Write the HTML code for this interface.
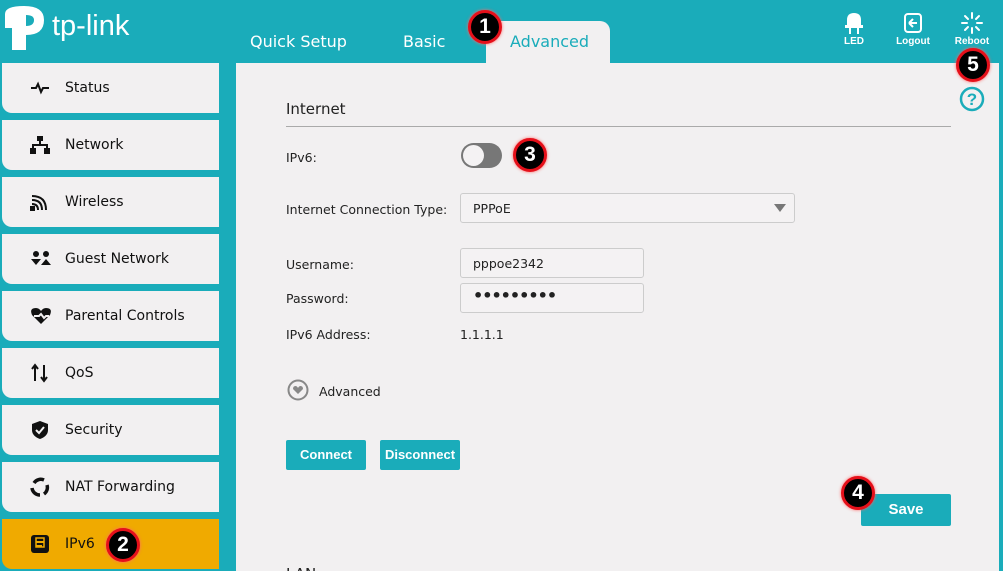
<!DOCTYPE html>
<html style="overflow:hidden;width:1003px;height:571px"><head><meta charset="utf-8"><style>
*{margin:0;padding:0;box-sizing:border-box}
body{width:1003px;height:571px;overflow:hidden;background:#1aacba;font-family:"DejaVu Sans","Liberation Sans",sans-serif;position:relative;color:#222}
.abs{position:absolute}
.tab{position:absolute;top:32px;font-size:16px;color:#fff}
.side{position:absolute;left:2px;width:217px;height:50px;background:#f2f0f1;border-radius:0 0 0 10px;font-size:14px;color:#111}
.side span{position:absolute;left:63px;top:17px}
.side svg{position:absolute;left:28px;top:15px}
.panel{position:absolute;left:236px;top:63px;width:763px;height:508px;background:#f2f0f1}
.lbl{position:absolute;font-size:12.5px;color:#222}
.inp{position:absolute;background:#f4f2f3;border:1px solid #ccc;border-radius:3px;font-size:12.5px;padding:7px 12px}
.btn{position:absolute;background:#1aacba;color:#fff;font-size:13px;font-weight:bold;text-align:center;border-radius:2px;font-family:"Liberation Sans",sans-serif}
.badge{position:absolute;width:34px;height:34px;border-radius:50%;background:#000;border:3px solid #e5101a;color:#fff;font-weight:bold;font-size:21px;text-align:center;line-height:28px;box-shadow:0 0 3px #f66;font-family:"Liberation Sans",sans-serif}
.hi{position:absolute;color:#fff;font-size:10px;text-align:center;font-weight:bold;font-family:"Liberation Sans",sans-serif}
</style></head><body>
<svg class="abs" style="left:2px;top:4px" width="50" height="48" viewBox="0 0 50 48"><path d="M10 46 V24 H3 V10 Q3 2 22 2 Q42 2 42 16 Q42 31 24 31 V46 Z" fill="#fff"/><path d="M24 11 Q32 11 32 16 Q32 22 24 22 Z" fill="#1aacba"/></svg>
<div class="abs" style="left:52px;top:10px;font-size:29px;color:#fff;font-family:'Liberation Sans',sans-serif">tp-link</div>
<div class="tab" style="left:250px">Quick Setup</div>
<div class="tab" style="left:403px">Basic</div>
<div class="abs" style="left:486px;top:21px;width:124px;height:44px;background:#f2f0f1;border-radius:0 10px 0 0"></div>
<div class="tab" style="left:510px;color:#1aacba">Advanced</div>
<svg class="abs" style="left:844px;top:12px" width="20" height="22" viewBox="0 0 20 22"><path d="M3 13 V8 Q3 1 10 1 Q17 1 17 8 V13 Z" fill="#fff"/><rect x="1" y="13" width="18" height="3" fill="#fff"/><rect x="5" y="16" width="2" height="6" fill="#fff"/><rect x="13" y="16" width="2" height="6" fill="#fff"/></svg>
<div class="hi" style="left:838px;top:36px;width:32px">LED</div>
<svg class="abs" style="left:903px;top:12px" width="20" height="22" viewBox="0 0 20 22"><rect x="2" y="2" width="16" height="18" rx="3" fill="none" stroke="#fff" stroke-width="2"/><path d="M6 11 L10 7 M6 11 L10 15 M6 11 H14" stroke="#fff" stroke-width="2" fill="none"/></svg>
<div class="hi" style="left:893px;top:36px;width:40px">Logout</div>
<svg class="abs" style="left:961px;top:12px" width="22" height="22" viewBox="0 0 22 22" stroke="#fff" stroke-width="2" stroke-linecap="round"><path d="M11 1V6M11 16V21M1 11H6M16 11H21M4 4L7 7M15 15L18 18M18 4L15 7M7 15L4 18"/></svg>
<div class="hi" style="left:950px;top:36px;width:44px">Reboot</div>
<div class="side" style="top:63px"><svg width="20" height="20" viewBox="0 0 20 20"><path d="M1 10H6L8 6L11 14L13 10H19" stroke="#111" stroke-width="2" fill="none"/></svg><span>Status</span></div>
<div class="side" style="top:120px"><svg width="20" height="20" viewBox="0 0 20 20"><rect x="7" y="1" width="6" height="5" fill="#111"/><path d="M10 6V10M3 14V10H17V14" stroke="#111" stroke-width="2" fill="none"/><rect x="0" y="13" width="6" height="6" fill="#111"/><rect x="14" y="13" width="6" height="6" fill="#111"/></svg><span>Network</span></div>
<div class="side" style="top:177px"><svg width="20" height="20" viewBox="0 0 20 20" fill="none" stroke="#111" stroke-width="2"><path d="M2 4Q16 4 16 18M2 8Q12 8 12 18M2 12Q8 12 8 18"/><rect x="1" y="15" width="3" height="3" fill="#111"/></svg><span>Wireless</span></div>
<div class="side" style="top:234px"><svg width="22" height="20" viewBox="0 0 22 20" fill="#111"><circle cx="6" cy="5" r="3"/><circle cx="16" cy="5" r="3"/><path d="M1 10L6 16L11 10ZM11 16L16 10L21 16Z"/></svg><span>Guest Network</span></div>
<div class="side" style="top:291px"><svg width="22" height="20" viewBox="0 0 22 20"><path d="M11 18L2 9Q-1 2 6 2Q9 2 11 5Q13 2 16 2Q23 2 20 9Z" fill="#111"/><path d="M4 10H9L11 8L14 12L16 10H19" stroke="#f2f0f1" stroke-width="2" fill="none"/></svg><span>Parental Controls</span></div>
<div class="side" style="top:348px"><svg width="20" height="20" viewBox="0 0 20 20" stroke="#111" stroke-width="2" fill="none"><path d="M5 18V3M2 6L5 2L8 6M14 2V17M11 14L14 18L17 14"/></svg><span>QoS</span></div>
<div class="side" style="top:405px"><svg width="20" height="20" viewBox="0 0 20 20"><path d="M10 1L18 4V10Q18 16 10 19Q2 16 2 10V4Z" fill="#111"/><path d="M6 10L9 13L14 7" stroke="#f2f0f1" stroke-width="2" fill="none"/></svg><span>Security</span></div>
<div class="side" style="top:462px"><svg width="20" height="20" viewBox="0 0 20 20" stroke="#111" stroke-width="3.5" fill="none"><path d="M4 6A8 8 0 0 1 14 3M17 8A8 8 0 0 1 14 17M10 18A8 8 0 0 1 2 11"/></svg><span>NAT Forwarding</span></div>
<div class="side" style="top:519px;background:#f0aa00"><svg width="20" height="20" viewBox="0 0 20 20"><rect x="1" y="1" width="18" height="18" rx="3" fill="#111"/><path d="M6 8H14M6 12H12" stroke="#f0aa00" stroke-width="2"/><rect x="6" y="4" width="8" height="9" fill="none" stroke="#f0aa00" stroke-width="1.5"/></svg><span>IPv6</span></div>
<div class="panel"></div>
<div class="abs" style="left:286px;top:100px;font-size:15px;color:#222">Internet</div>
<div class="abs" style="left:286px;top:126px;width:665px;height:1px;background:#aaa"></div>
<div class="lbl" style="left:286px;top:150px">IPv6:</div>
<div class="abs" style="left:461px;top:143px;width:41px;height:25px;border-radius:13px;background:#777"></div>
<div class="abs" style="left:463px;top:145px;width:21px;height:21px;border-radius:50%;background:#f4f2f3"></div>
<div class="lbl" style="left:286px;top:202px">Internet Connection Type:</div>
<div class="inp" style="left:460px;top:193px;width:335px;height:30px">PPPoE</div>
<div class="abs" style="left:774px;top:204px;width:0;height:0;border-left:6px solid transparent;border-right:6px solid transparent;border-top:8px solid #777"></div>
<div class="lbl" style="left:286px;top:257px">Username:</div>
<div class="inp" style="left:460px;top:248px;width:184px;height:30px">pppoe2342</div>
<div class="lbl" style="left:286px;top:291px">Password:</div>
<div class="inp" style="left:460px;top:283px;width:184px;height:30px;font-size:16px;padding-top:2px;letter-spacing:-1px;font-weight:bold">•••••••••</div>
<div class="lbl" style="left:286px;top:327px">IPv6 Address:</div>
<div class="lbl" style="left:460px;top:327px">1.1.1.1</div>
<svg class="abs" style="left:287px;top:379px" width="22" height="22" viewBox="0 0 22 22"><circle cx="11" cy="11" r="9.5" fill="none" stroke="#888" stroke-width="2"/><path d="M11 15L6 10Q6 7 8.5 7Q10 7 11 9Q12 7 13.5 7Q16 7 16 10Z" fill="#888"/></svg>
<div class="lbl" style="left:319px;top:384px">Advanced</div>
<div class="btn" style="left:286px;top:440px;width:80px;height:30px;line-height:30px">Connect</div>
<div class="btn" style="left:380px;top:440px;width:80px;height:30px;line-height:30px">Disconnect</div>
<div class="btn" style="left:861px;top:494px;width:90px;height:32px;line-height:32px;font-size:15px">Save</div>
<div class="abs" style="left:286px;top:565px;font-size:15px;color:#222">LAN</div>
<svg class="abs" style="left:959px;top:86px" width="26" height="26" viewBox="0 0 26 26"><circle cx="13" cy="13" r="11" fill="none" stroke="#1aacba" stroke-width="2.5"/><text x="13" y="19" text-anchor="middle" font-size="17" font-weight="bold" fill="#1aacba" font-family="Liberation Sans,sans-serif">?</text></svg>
<div class="badge" style="left:468px;top:10px">1</div>
<div class="badge" style="left:106px;top:528px">2</div>
<div class="badge" style="left:513px;top:138px">3</div>
<div class="badge" style="left:841px;top:476px">4</div>
<div class="badge" style="left:956px;top:48px">5</div>
</body></html>
